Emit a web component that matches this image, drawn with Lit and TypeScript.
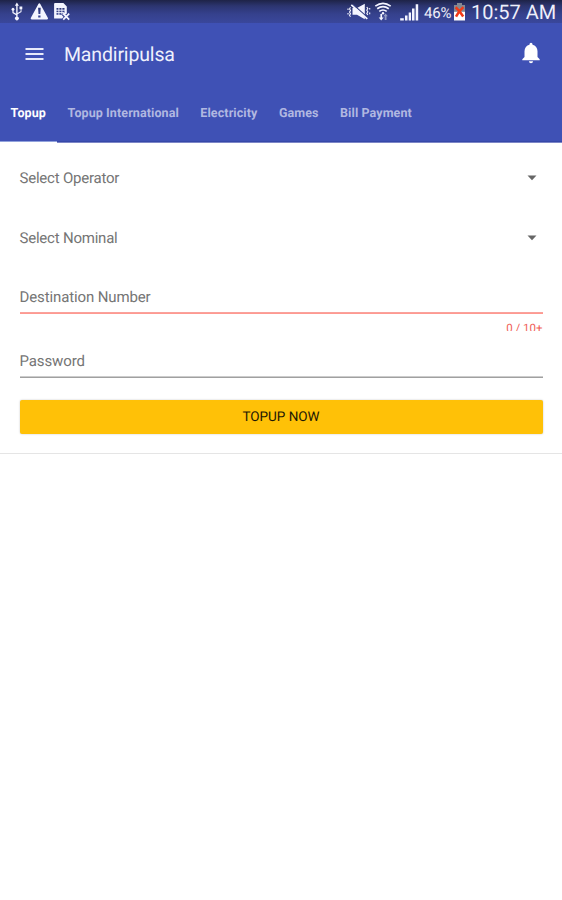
import { LitElement, html, css } from "lit";
import { customElement, property, state } from "lit/decorators.js";
import { classMap } from "lit/directives/class-map.js";

@customElement("status-bar")
class StatusBar extends LitElement {
  static styles = css`
    :host {
      display: flex;
      justify-content: space-between;
      height: 23px;
      background: linear-gradient(#1e2347 0, #2c3570 6px, #35418d 14px, #3a479b 23px);
      color: #eeeffa;
      font-family: Roboto, sans-serif;
    }
    svg { display: block; flex: none; }
    .right { display: flex; }
    .percent { width: 27px; margin-left: 4px; font-size: 15px; line-height: 26px; letter-spacing: -0.2px; white-space: nowrap; }
    .clock { width: 85px; margin: 0 6px 0 4px; font-size: 20px; line-height: 24px; letter-spacing: 0; white-space: nowrap; }
  `;
  render() {
    return html`
      <svg width="76" height="23" viewBox="0 0 76 23" fill="#f4f5ff">
        <path d="M16.9 2.6l2 3.1h-1.3v7.2l3-1.6V9.2h-1.1V6.5h2.8v2.7h-.8v2.7l-3.9 2.3v2.5a1.9 1.900 0 1 1-1.4 0v-1.5l-3.8-2.2v-2.2a1.5 1.500 0 1 1 1.2 0v1.5l2.6 1.5V5.7h-1.3z"/>
        <path fill-rule="evenodd" d="M39.3 3.2q.6 0 1 .7l7.5 13.8q.9 1.8-.9 1.8H31.8q-1.8 0-.9-1.8L38.400 3.900q.4-.7.9-.7zM38.100 7.800l.4 6.200h1.800l.4-6.200zm.1 7.700v2h2.300v-2z"/>
        <path fill-rule="evenodd" d="M55 3h8.400l3.400 3.400v7l-2.300 1.500-1.300-1.200-1.400 1.400 1.700 1.900-1.500 1.600H54.100V4q0-1 .9-1zm1.500 5v6.700h5l3-2.200V8z"/>
        <path fill="none" stroke="#f4f5ff" stroke-width=".9" d="M58.900 8v7M61.900 8v6M56 10.200h9M56 12.600h8"/>
        <path fill="none" stroke="#f4f5ff" stroke-width="1.700" d="M63.200 13.700l6 6M69.200 13.700l-6 6"/>
      </svg>
      <div class="right">
        <svg width="74" height="23" viewBox="346 0 74 23" fill="#f4f5ff">
          <path d="M352.500 8h4.500l7.800-4.200v15.400l-7.800-4.500h-4.500z"/>
          <path fill="none" stroke="#354083" stroke-width="1.300" d="M353 4.600l14.500 13"/>
          <path fill="none" stroke="#f4f5ff" stroke-width="1.700" d="M351.300 4.800l16 14"/>
          <path fill="none" stroke="#f4f5ff" stroke-width="1.100" d="M350.500 7.300l-1 1.600 1 1.600-1 1.600 1 1.600-1 1.600 1 1.400M348 8.500v1.500M348 13v1.500M366.800 7l1 1.600-1 1.600 1 1.600-1 1.600 1 1.600M369.700 8v1.500M369.700 12.500v1.800"/>
          <path fill="none" stroke="#f4f5ff" stroke-width="1.700" d="M375.300 6.100q7.700-5.500 15.400 0M377.200 8.800q5.800-4.300 11.600 0M379.300 11.400q3.700-2.800 7.400 0"/>
          <circle cx="383" cy="13.200" r="1.200"/>
          <path d="M380.400 14h1.700v3.600h1.600l-2.500 3-2.500-3h1.700z"/>
          <path fill="#929bc5" d="M384.700 20v-3.800h-1.300l2.200-2.700 2.200 2.700h-1.300V20z"/>
          <path d="M400.200 18.200h3.600v2.200h-3.600zM405 15.500h2.500v4.900H405zM408.700 12.500h2.300v7.900h-2.300zM412 8.600h2.500v11.800H412zM415.700 4.200h2.500v16.200h-2.500z"/>
        </svg>
        <span class="percent">46%</span>
        <svg width="16" height="23" viewBox="451 0 16 23">
          <path fill="#858891" d="M457 3h5v2h3v7h-11V5h3z"/>
          <path fill="#fff" d="M454 11.800h11v8.700h-11z"/>
          <path fill="none" stroke="#f23a17" stroke-width="2.500" d="M455.600 7.200q4 3.300 7.600 9.300M463.400 7.100q-4.500 3.800-7.400 9.500"/>
        </svg>
        <span class="clock">10:57 AM</span>
      </div>
    `;
  }
}

@customElement("tab-strip")
class TabStrip extends LitElement {
  @property({ attribute: false }) tabs: string[] = [];
  @state() private selected = 0;
  static styles = css`
    :host {
      display: flex;
      height: 58px;
      font: 700 12.500px/57px Roboto, sans-serif;
      color: #b1b8e1;
      box-shadow: inset 0 -1px #7c86c7, inset 0 -2px #3648a8;
    }
    .tab { padding: 0 10.800px 0 10.600px; box-sizing: border-box; white-space: nowrap; letter-spacing: 0.1px; }
    .active { width: 57px; color: #fff; box-shadow: inset 0 -1px #fff, inset 0 -2px #91a2dc; }
  `;
  render() {
    return this.tabs.map((name, i) => html`<div
      class=${classMap({ tab: true, active: i === this.selected })}
      @click=${() => { this.selected = i; }}>${name}</div>`);
  }
}

@customElement("app-root")
class AppRoot extends LitElement {
  static styles = css`
    :host {
      display: block;
      min-height: 900px;
      background: #fff;
      font-family: Roboto, sans-serif;
      text-rendering: geometricPrecision;
    }
    .header { background: #3f51b5; height: 143px; }
    .toolbar {
      height: 62px;
      box-sizing: border-box;
      display: flex;
      align-items: center;
      padding: 0 20px 0 25px;
      color: #eef0fc;
    }
    .toolbar svg { display: block; flex: none; }
    .title { flex: 1; margin-left: 20px; padding-top: 1px; font-size: 19.500px; line-height: 24px; letter-spacing: -0.15px; }
    .form { height: 311px; box-sizing: border-box; padding: 20px 19.500px 0; border-bottom: 1px solid #e5e5e5; }
    .row {
      height: 60px;
      box-sizing: border-box;
      display: flex;
      justify-content: space-between;
      align-items: flex-start;
      color: #757575;
      font-size: 15px;
      line-height: 31px;
      letter-spacing: -0.22px;
    }
    .row svg { margin: 12px 6px 0 0; }
    .field {
      height: 31px;
      box-sizing: border-box;
      color: #757575;
      font-size: 15px;
      line-height: 28px;
      letter-spacing: -0.12px;
      border-bottom: 1px solid #a0a0a0;
      box-shadow: inset 0 -1px #ccc;
    }
    .invalid { border-color: #ff9990; box-shadow: inset 0 -1px #f9a29c; }
    .counter {
      height: 10px;
      margin: 7px 0 16px;
      overflow: hidden;
      text-align: right;
      color: #f06057;
      font-size: 11.500px;
      line-height: 14px;
    }
    .submit {
      display: block;
      width: 100%;
      height: 34px;
      margin-top: 22px;
      padding: 0;
      border: 0;
      border-radius: 2px;
      background: #ffc107;
      box-shadow: 0 0 2px rgba(0, 0, 0, 0.24);
      color: #1c1704;
      font: 13.500px/34px Roboto, sans-serif;
      text-rendering: geometricPrecision;
    }
  `;
  private select(label: string) {
    return html`<div class="row"><span>${label}</span>
      <svg width="10" height="6" viewBox="0 0 10 6"><path fill="#666" d="M.5.500h9L5 5.200z"/></svg>
    </div>`;
  }
  render() {
    return html`
      <div class="header">
        <status-bar></status-bar>
        <div class="toolbar">
          <svg width="19" height="14" viewBox="0 0 19 14"><path fill="none" stroke="#e7eafa" stroke-width="2" d="M.5 2h18M.5 7h18M.5 12h18"/></svg>
          <span class="title">Mandiripulsa</span>
          <svg width="22" height="24" viewBox="0 1.700 22 24"><path fill="#fff" d="M11 23a2.200 2.200 0 0 0 2.100-2H8.900a2.200 2.200 0 0 0 2.100 2zm6.500-6.200v-5.900c0-3.200-2-5.700-5-6.400v-.6a1.500 1.500 0 0 0-3 0v.6c-3 .7-5 3.200-5 6.400v5.900l-2.200 2.200v.9h17.400v-.9z"/></svg>
        </div>
        <tab-strip .tabs=${["Topup", "Topup International", "Electricity", "Games", "Bill Payment"]}></tab-strip>
      </div>
      <div class="form">
        ${this.select("Select Operator")}
        ${this.select("Select Nominal")}
        <div class="field invalid">Destination Number</div>
        <div class="counter">0 / 10+</div>
        <div class="field">Password</div>
        <button class="submit">TOPUP NOW</button>
      </div>
    `;
  }
}
